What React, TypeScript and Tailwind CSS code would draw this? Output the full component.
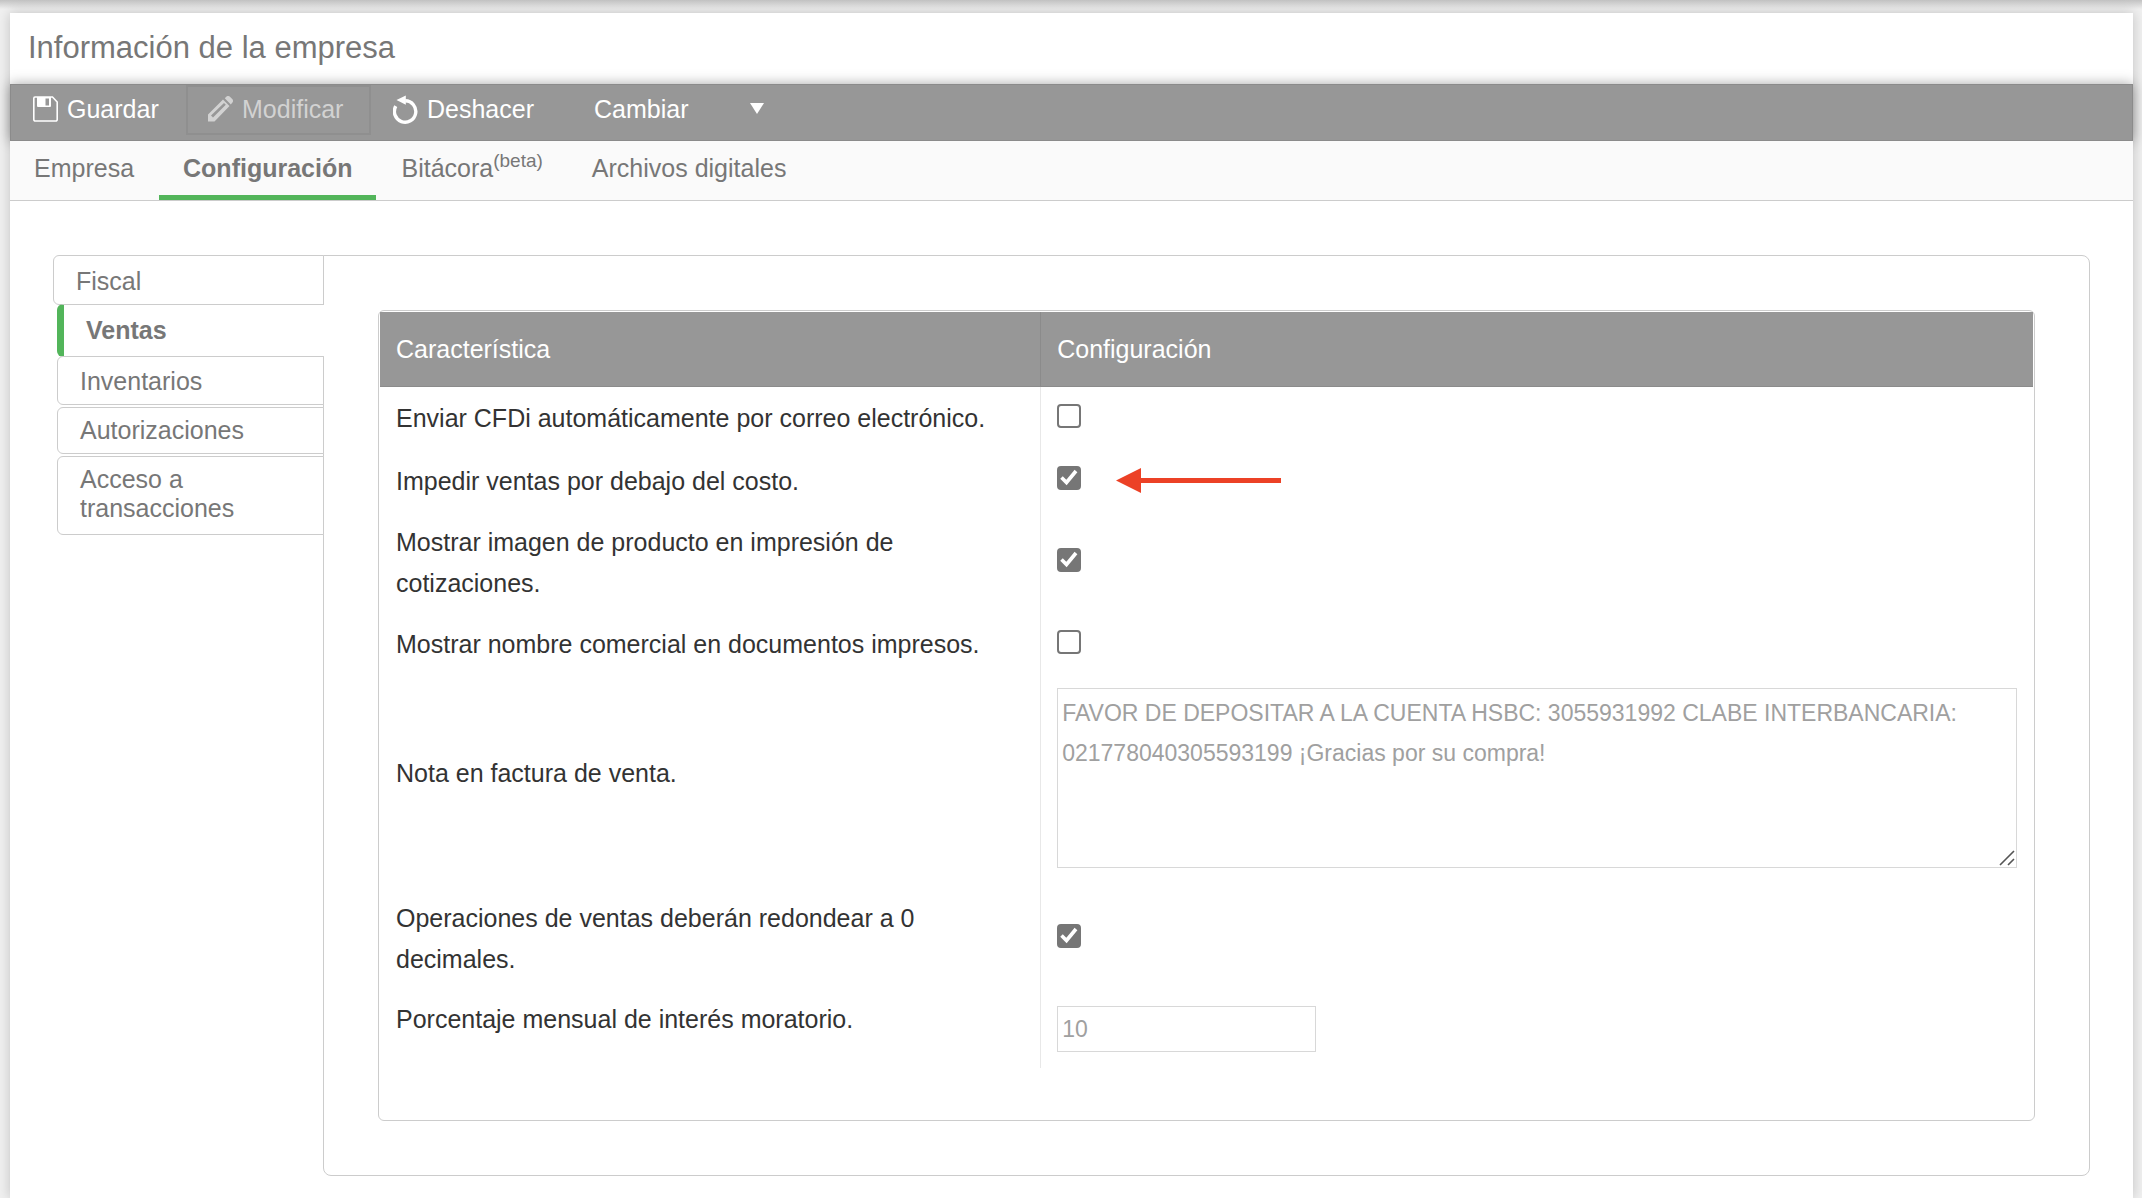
import { useState } from 'react'
import type { ReactNode } from 'react'
import clsx from 'clsx'

const tabs = ['Empresa', 'Configuración', 'Bitácora', 'Archivos digitales']

const sections = [
    { name: 'Fiscal', className: 'w-[271px] pt-[11px] pb-2' },
    { name: 'Ventas', className: '-mt-px w-[267px] py-[11px]' },
    { name: 'Inventarios', className: '-mt-px w-[267px] pt-2.5 pb-2' },
    { name: 'Autorizaciones', className: 'mt-0.5 w-[267px] py-2' },
    { name: 'Acceso a transacciones', className: 'mt-0.5 w-[267px] pt-2 pr-16 pb-[11px]' }
]

function SaveIcon() {
    return (
        <svg width="25" height="26" viewBox="0 0 25 26" aria-hidden="true">
            <path d="M2 1h17.500l4.700 5v17.500a1.500 1.500 0 0 1-1.500 1.500H2.300A1.500 1.500 0 0 1 .8 23.500V2.200A1.200 1.200 0 0 1 2 1z" fill="none" stroke="currentColor" strokeWidth="1.600" />
            <path d="M4 1h14v9a1 1 0 0 1-1 1H5a1 1 0 0 1-1-1zM12.500 2.500v7H16v-7z" fill="currentColor" fillRule="evenodd" />
        </svg>
    )
}

function PencilIcon() {
    return (
        <svg width="25" height="26" viewBox="0 0 25 26" aria-hidden="true">
            <path d="M0 25.500V18.500L15 3.500l6.500 6.500L6.500 25.500zM3 19.500l2 2L17.800 8.800 16 7z" fill="currentColor" fillRule="evenodd" />
            <path d="M16.800 2.200l1.200-1.200a3 3 0 0 1 4.200 0l1.800 1.800a3 3 0 0 1 0 4.200l-1.200 1.400z" fill="currentColor" />
        </svg>
    )
}

function UndoIcon() {
    return (
        <svg width="25" height="29" viewBox="0 0 25 29" aria-hidden="true">
            <path d="M2.800 11.200A10.700 10.700 0 1 0 12.300 5.800" fill="none" stroke="currentColor" strokeWidth="3.400" />
            <path d="M3.500 5L12.800.5v9.200z" fill="currentColor" />
        </svg>
    )
}

function CheckBox({ id, defaultChecked = false }: { id: string; defaultChecked?: boolean }) {
    return (
        <span className="relative mb-1.5 block size-6">
            <input
                id={id}
                type="checkbox"
                defaultChecked={defaultChecked}
                className="peer block size-6 appearance-none rounded border-2 border-[#767676] bg-white checked:bg-[#767676]"
            />
            <svg viewBox="0 0 24 24" className="pointer-events-none absolute inset-0 hidden size-6 text-white peer-checked:block" aria-hidden="true">
                <path d="M4.500 11.500L9.500 16.500L19 5" fill="none" stroke="currentColor" strokeWidth="3.600" />
            </svg>
        </span>
    )
}

function Row({ id, label, height, labelClass, children }: {
    id: string
    label: string
    height: string
    labelClass?: string
    children: ReactNode
}) {
    return (
        <tr className={height}>
            <td className={clsx('border-r border-[#e8e8e8] px-4', labelClass)}>
                <label htmlFor={id} className="block">{label}</label>
            </td>
            <td className="px-4">{children}</td>
        </tr>
    )
}

export default function App() {
    const [tab, setTab] = useState('Configuración')
    const [section, setSection] = useState('Ventas')

    return (
        <div className="min-h-screen bg-[#f0f0f0] font-['Liberation_Sans',Arial,sans-serif] text-[25px] leading-[41px] text-[#777]">
            <div className="h-[13px] bg-linear-to-b from-[#c2c2c2] to-[#f0f0f0] to-70%" />
            <main className="mr-[9px] ml-[10px] min-h-[1185px] bg-white shadow-[0_0_12px_rgba(0,0,0,0.2)]">
                <h1 className="h-[71px] px-[18px] pt-3.5 text-[31px]">Información de la empresa</h1>

                <div className="flex h-[57px] items-start border border-[#8b8b8b] bg-[#979797] text-white shadow-[0_0_12px_rgba(0,0,0,0.35)]">
                    <button className="flex h-[50px] w-[175px] items-center gap-[9px] pb-0.5 pl-[22px]">
                        <SaveIcon />
                        Guardar
                    </button>
                    <button disabled className="flex h-[50px] w-[185px] items-center gap-[9px] border-2 border-[#8f8f8f] pb-0.5 pl-5 text-[#d2d2d2]">
                        <PencilIcon />
                        Modificar
                    </button>
                    <button className="flex h-[50px] w-[201px] items-center gap-[9px] pb-0.5 pl-[22px]">
                        <UndoIcon />
                        Deshacer
                    </button>
                    <button className="flex h-[50px] items-center gap-[62px] pb-0.5 pl-[22px]">
                        Cambiar
                        <svg width="14" height="12" viewBox="0 0 14 12" aria-hidden="true">
                            <path d="M0 0h14L7 11z" fill="currentColor" />
                        </svg>
                    </button>
                </div>

                <nav className="flex h-[60px] gap-px border-b border-[#ccc] bg-[#fafafa]">
                    {tabs.map((name) => (
                        <button
                            key={name}
                            onClick={() => setTab(name)}
                            className={clsx('h-[59px] border-b-5 px-6', tab === name ? 'border-[#52b55a] font-bold' : 'border-transparent')}
                        >
                            {name}
                            {name === 'Bitácora' && <sup className="text-[19px]">(beta)</sup>}
                        </button>
                    ))}
                </nav>

                <div className="flex items-start px-[43px] pt-[54px] pb-5">
                    <div className="z-10 -mr-px flex w-[271px] shrink-0 flex-col items-end leading-[29px]">
                        {sections.map(({ name, className }) => (
                            <button
                                key={name}
                                onClick={() => setSection(name)}
                                className={clsx(
                                    'rounded-l-md border-[#ccc] bg-white pl-[22px] text-left',
                                    section === name ? 'border-y border-l-7 border-l-[#52b55a] font-bold' : 'border',
                                    className
                                )}
                            >
                                {name}
                            </button>
                        ))}
                    </div>

                    <section className="min-w-0 flex-1 rounded-r-lg rounded-bl-lg border border-[#ccc] p-[54px]">
                        <div className="rounded-md border border-[#ccc] p-px pb-[52px]">
                            <table className="w-full table-fixed border-separate border-spacing-0 text-[#333]">
                                <thead className="bg-[#979797] text-left text-white">
                                    <tr className="h-[75px]">
                                        <th className="w-2/5 border-r border-b border-[#8b8b8b] px-4 font-normal">Característica</th>
                                        <th className="border-b border-[#8b8b8b] px-4 font-normal">Configuración</th>
                                    </tr>
                                </thead>
                                <tbody>
                                    <Row id="cfdi" label="Enviar CFDi automáticamente por correo electrónico." height="h-[63px]">
                                        <CheckBox id="cfdi" />
                                    </Row>
                                    <Row id="costo" label="Impedir ventas por debajo del costo." height="h-[62px]">
                                        <div className="flex items-center gap-[35px]">
                                            <CheckBox id="costo" defaultChecked />
                                            <svg width="165" height="25" viewBox="0 0 165 25" className="mb-0.5" aria-hidden="true">
                                                <path d="M0 12.500L25 0v10h140v5H25v10z" fill="#ec4126" />
                                            </svg>
                                        </div>
                                    </Row>
                                    <Row id="imagen" label="Mostrar imagen de producto en impresión de cotizaciones." height="h-[102px]">
                                        <CheckBox id="imagen" defaultChecked />
                                    </Row>
                                    <Row id="nombre" label="Mostrar nombre comercial en documentos impresos." height="h-[61px]">
                                        <CheckBox id="nombre" />
                                    </Row>
                                    <Row id="nota" label="Nota en factura de venta." height="h-[213px]" labelClass="pb-4">
                                        <div className="relative mb-2">
                                            <textarea
                                                id="nota"
                                                defaultValue="FAVOR DE DEPOSITAR A LA CUENTA HSBC: 3055931992 CLABE INTERBANCARIA: 021778040305593199 ¡Gracias por su compra!"
                                                className="block h-[180px] w-full resize-none border border-[#d8d8d8] bg-white px-1 py-1 text-[23px] leading-[40px] text-[#a0a0a0]"
                                            />
                                            <svg width="16" height="16" viewBox="0 0 16 16" className="pointer-events-none absolute right-0.5 bottom-0.5" aria-hidden="true">
                                                <path d="M1 15L15 1M9 15l6-6" stroke="#555" strokeWidth="1.600" />
                                            </svg>
                                        </div>
                                    </Row>
                                    <Row id="redondeo" label="Operaciones de ventas deberán redondear a 0 decimales." height="h-[102px]">
                                        <CheckBox id="redondeo" defaultChecked />
                                    </Row>
                                    <Row id="interes" label="Porcentaje mensual de interés moratorio." height="h-[78px]" labelClass="pb-5">
                                        <input
                                            id="interes"
                                            type="text"
                                            defaultValue="10"
                                            className="block h-[46px] w-[259px] border border-[#d8d8d8] bg-white px-1 text-[23px] text-[#a0a0a0]"
                                        />
                                    </Row>
                                </tbody>
                            </table>
                        </div>
                    </section>
                </div>
            </main>
        </div>
    )
}
